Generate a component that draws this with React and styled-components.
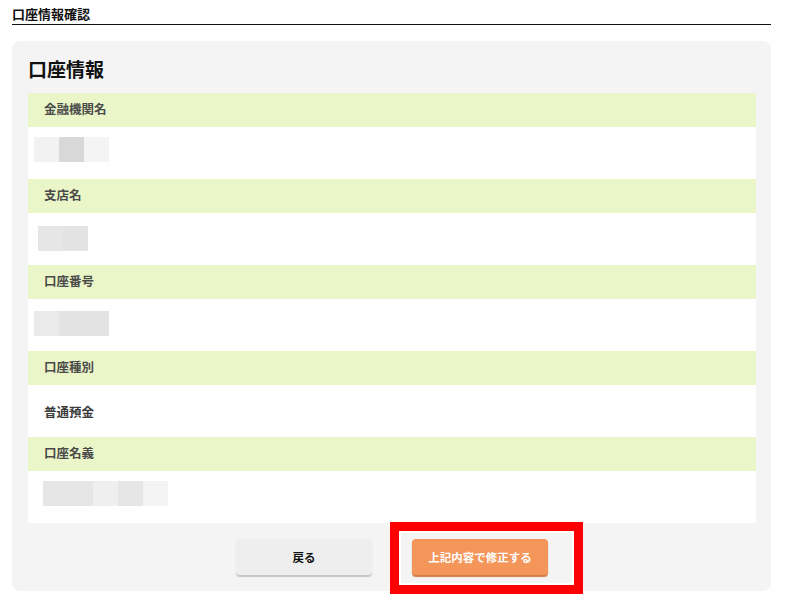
import styled, { createGlobalStyle } from 'styled-components';

const GlobalStyle = createGlobalStyle`
  * {
    box-sizing: border-box;
  }
  body {
    margin: 0;
    background: #fff;
    font-family: 'Noto Sans CJK JP', 'Noto Sans', sans-serif;
    color: #333;
  }
`;

const accountFields = [
  { label: '金融機関名', masked: { x: 6, y: 10, shades: ['#f2f2f2', '#d8d8d8', '#f4f4f4'] } },
  { label: '支店名', masked: { x: 10, y: 13, shades: ['#e6e6e6', '#e3e3e3'] } },
  { label: '口座番号', masked: { x: 6, y: 12, shades: ['#eaeaea', '#e3e3e3', '#e3e3e3'] } },
  { label: '口座種別', text: '普通預金' },
  {
    label: '口座名義',
    masked: { x: 15, y: 10, shades: ['#e6e6e6', '#e6e6e6', '#efefef', '#e6e6e6', '#f3f3f4'] },
  },
];

const App = () => {
  return (
    <Page>
      <GlobalStyle />
      <PageTitle>口座情報確認</PageTitle>
      <Card>
        <CardTitle>口座情報</CardTitle>
        <FieldList>
          {accountFields.map((field) => (
            <Field key={field.label}>
              <FieldLabel>{field.label}</FieldLabel>
              <FieldValue>
                {field.text ? (
                  <ValueText>{field.text}</ValueText>
                ) : (
                  <Masked $x={field.masked.x} $y={field.masked.y}>
                    {field.masked.shades.map((shade, i) => (
                      <MaskCell key={i} $shade={shade} />
                    ))}
                  </Masked>
                )}
              </FieldValue>
            </Field>
          ))}
        </FieldList>
        <Actions>
          <Button>戻る</Button>
          <Highlighted>
            <Button $primary>上記内容で修正する</Button>
            <Marker />
          </Highlighted>
        </Actions>
      </Card>
    </Page>
  );
};

export default App;

const Page = styled.div`
  width: 759px;
  margin-left: 12px;
  padding-bottom: 22px;
`;

const PageTitle = styled.h1`
  margin: 0;
  padding-top: 4px;
  font-size: 13px;
  line-height: 20px;
  font-weight: 700;
  color: #111;
  border-bottom: 1px solid #111;
`;

const Card = styled.section`
  margin-top: 16px;
  padding: 14px 15px 14px 16px;
  background-color: #f4f4f4;
  border-radius: 8px;
`;

const CardTitle = styled.h2`
  margin: 0 0 10px;
  font-size: 19px;
  line-height: 28px;
  font-weight: 700;
  color: #111;
`;

const FieldList = styled.dl`
  margin: 0;
`;

const Field = styled.div`
  display: flex;
  flex-direction: column;
`;

const FieldLabel = styled.dt`
  display: flex;
  align-items: center;
  height: 34px;
  padding: 0 0 2px 16px;
  background-color: #eaf6c8;
  font-size: 12.5px;
  line-height: 16px;
  font-weight: 700;
  color: #4a4a4a;
`;

const FieldValue = styled.dd`
  display: flex;
  align-items: center;
  height: 52px;
  margin: 0;
  background-color: #fff;
`;

const ValueText = styled.span`
  padding-left: 16px;
  font-size: 12.5px;
  font-weight: 700;
  color: #3a3a3a;
`;

const Masked = styled.div`
  display: flex;
  align-self: flex-start;
  margin: ${({ $y }) => $y}px 0 0 ${({ $x }) => $x}px;
  filter: blur(0.4px);
`;

const MaskCell = styled.span`
  width: 25px;
  height: 25px;
  background-color: ${({ $shade }) => $shade};
`;

const Actions = styled.div`
  display: flex;
  justify-content: center;
  gap: 40px;
  margin-top: 16px;
  padding-bottom: 2px;
`;

const Button = styled.button`
  width: 136px;
  height: 36px;
  border: none;
  border-radius: 4px;
  font-family: inherit;
  font-size: 11.5px;
  font-weight: 700;
  color: ${({ $primary }) => ($primary ? '#fff' : '#111')};
  background-color: ${({ $primary }) => ($primary ? '#f4955a' : '#eeeeee')};
  box-shadow: 0 2px 1px ${({ $primary }) => ($primary ? '#d27c46' : '#c6c6c6')};
  cursor: pointer;
`;

const Highlighted = styled.div`
  position: relative;
`;

const Marker = styled.span`
  position: absolute;
  left: -22px;
  top: -17px;
  width: 193px;
  height: 72px;
  border: 9px solid #ff0000;
  box-shadow: inset 0 0 0 2px #fff;
  pointer-events: none;
`;
